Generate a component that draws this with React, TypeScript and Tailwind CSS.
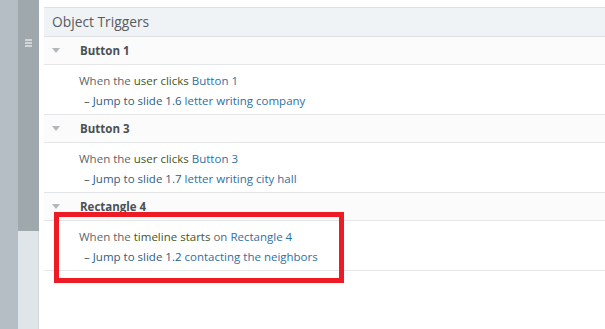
import React from "react";

type Part = { text: string; tone: "plain" | "verb" | "link" | "action" };

type Trigger = {
  name: string;
  when: Part[];
  jump: string;
  target: string;
};

const triggers: Trigger[] = [
  {
    name: "Button 1",
    when: [
      { text: "When the ", tone: "plain" },
      { text: "user clicks", tone: "verb" },
      { text: " Button 1", tone: "link" },
    ],
    jump: "Jump to slide 1.6",
    target: "letter writing company",
  },
  {
    name: "Button 3",
    when: [
      { text: "When the ", tone: "plain" },
      { text: "user clicks", tone: "verb" },
      { text: " Button 3", tone: "link" },
    ],
    jump: "Jump to slide 1.7",
    target: "letter writing city hall",
  },
  {
    name: "Rectangle 4",
    when: [
      { text: "When the ", tone: "plain" },
      { text: "timeline starts", tone: "verb" },
      { text: " on ", tone: "plain" },
      { text: "Rectangle 4", tone: "link" },
    ],
    jump: "Jump to slide 1.2",
    target: "contacting the neighbors",
  },
];

const toneClass: Record<Part["tone"], string> = {
  plain: "text-[#5d666d]",
  verb: "text-[#45561a]",
  link: "text-[#2f6f9f]",
  action: "text-[#2d5e7f]",
};

function Caret() {
  return (
    <svg width="8" height="5" viewBox="0 0 8 5" className="shrink-0">
      <path d="M0 0h8L4 5z" fill="#b3b7bb" />
    </svg>
  );
}

export default function App() {
  return (
    <div
      className="relative flex h-[329px] w-[605px] overflow-hidden bg-white"
      style={{ fontFamily: "'Open Sans', 'Noto Sans', sans-serif" }}
    >
      {/* Side rails */}
      <div className="w-[18px] shrink-0 bg-[#b6bec5]" />
      <div className="flex w-[21px] shrink-0 flex-col">
        <div className="flex h-[231px] justify-center bg-[#9ea8ad] pt-[39px]">
          <div className="flex h-[8px] w-[7px] flex-col justify-between">
            <div className="h-[2px] bg-[#d0d6d9]" />
            <div className="h-[2px] bg-[#d0d6d9]" />
            <div className="h-[2px] bg-[#d0d6d9]" />
          </div>
        </div>
        <div className="flex-1 border-r border-[#d3d8dc] bg-[#e0e5e9]" />
      </div>

      {/* Panel */}
      <div className="ml-[5px] flex-1 pt-[7px]">
        <div className="flex h-[30px] items-center border-y border-[#dde1e4] bg-[#eff3f6] pl-[8px] text-[13.8px] text-[#555b60]">
          Object Triggers
        </div>

        {triggers.map((t) => (
          <div key={t.name}>
            <div className="flex h-[28px] items-center border-b border-[#e3e5e7] bg-[#fbfbfb] pl-[8px]">
              <Caret />
              <span className="ml-[20px] text-[11.5px] font-bold text-[#4b5054]">{t.name}</span>
            </div>
            <div className="h-[50px] border-b border-[#e3e5e7] pl-[35px] pt-[6px] text-[11.5px] leading-[20px]">
              <div>
                {t.when.map((p, i) => (
                  <span key={i} className={toneClass[p.tone]}>
                    {p.text}
                  </span>
                ))}
              </div>
              <div className="pl-[5px]">
                <span className="mr-[3px] text-[#4f5559]">–</span>
                <span className={toneClass.action}>{t.jump} </span>
                <span className={toneClass.link}>{t.target}</span>
              </div>
            </div>
          </div>
        ))}
      </div>

      {/* Annotation box */}
      <div className="absolute left-[54px] top-[212px] h-[71px] w-[290px] border-[5px] border-[#ed1c24]" />
    </div>
  );
}
